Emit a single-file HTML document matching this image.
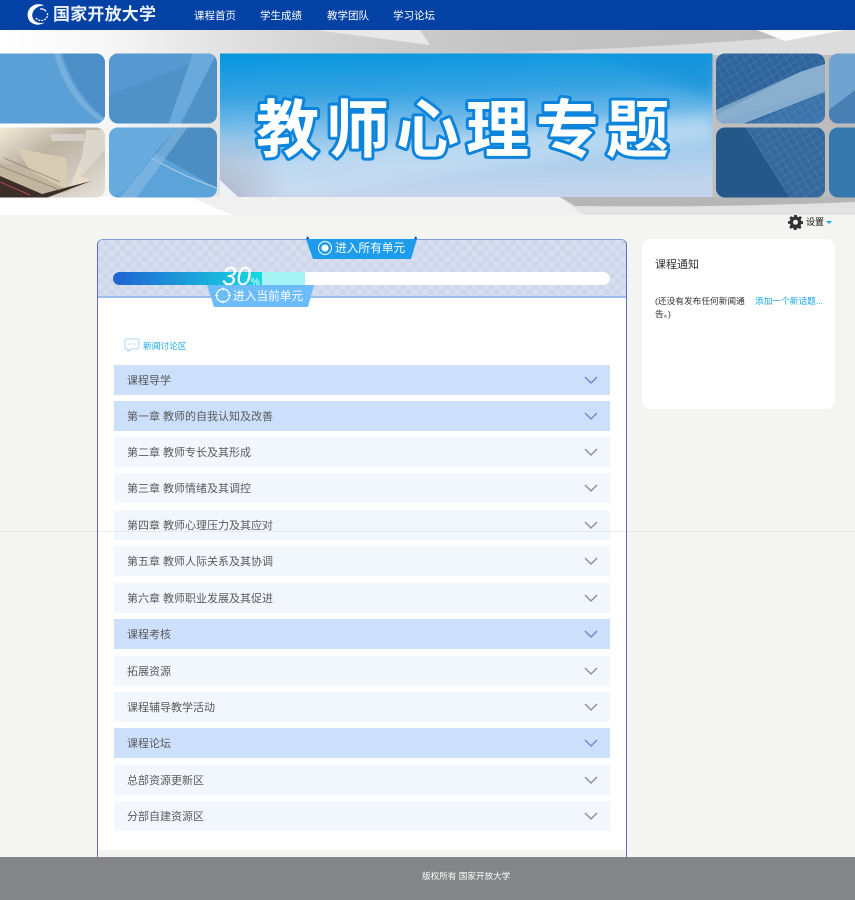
<!DOCTYPE html>
<html lang="zh-CN"><head><meta charset="utf-8"><title>教师心理专题</title>
<style>
*{box-sizing:border-box;margin:0;padding:0}
html,body{width:855px;height:900px;overflow:hidden;background:#f4f4f3}
body{position:relative;font-family:"Liberation Sans","WenQuanYi Zen Hei","Noto Sans CJK SC",sans-serif}
.a{position:absolute;white-space:nowrap}
.top{left:0;top:0;width:855px;height:30px;background:#0341a4}
.nav{top:9px;font-size:10.5px;line-height:14px;color:#fff}
.card{left:97px;top:239px;width:530px;height:618px;background:#fff;border:1px solid #6169c4;border-top-color:#7f9fe0;border-bottom:0;border-radius:6px 6px 0 0;overflow:hidden}
.head{left:0;top:0;width:528px;height:58px;border-bottom:2px solid #9dbcec;background-color:#d7deef;
background-image:linear-gradient(45deg,#ced6eb 25%,transparent 25%,transparent 75%,#ced6eb 75%),linear-gradient(45deg,#ced6eb 25%,transparent 25%,transparent 75%,#ced6eb 75%);background-size:11px 11px;background-position:0 0,5.5px 5.5px}
.row{left:114px;width:496px;height:30px;background:#f2f7fe;color:#5a5a5a;font-size:11px;line-height:32px;padding-left:13px}
.row.on{background:#cce0fc}
.row svg{position:absolute;right:12px;top:10px}
.side{left:642px;top:239px;width:193px;height:170px;background:#fff;border-radius:8px}
.foot{left:0;top:857px;width:855px;height:43px;background:#848586}
.line{left:0;top:531px;width:855px;height:1px;background:rgba(120,120,110,.1)}
</style></head><body>

<div class="a top"></div>
<svg class="a" style="left:26px;top:3px" width="24" height="23" viewBox="0 0 24 23"><path d="M18 2.500C15 .5 9 .5 5 4 .5 8 .5 15 4.500 19c4 3.500 10 3.500 14 .5-4 1-8 .5-10.500-2.500C5 13.500 6 8.500 9.500 5.500 12 3.500 15 2.500 18 2.500z" fill="#fff"/><path d="M10 15c2 3 7 3.500 10 .5 1.500-1.500 2-4 1.300-6" fill="none" stroke="#fff" stroke-width="1.300" stroke-dasharray="2 1"/><path d="M14 6c2.500-.5 5 .5 6 2.500" fill="none" stroke="#fff" stroke-width="1.200"/></svg>
<div class="a" style="left:53px;top:5px;font-size:17px;line-height:20px;font-weight:bold;color:#e9f0f8;letter-spacing:.2px">国家开放大学</div>
<div class="a nav" style="left:194px">课程首页</div>
<div class="a nav" style="left:260px">学生成绩</div>
<div class="a nav" style="left:327px">教学团队</div>
<div class="a nav" style="left:393px">学习论坛</div>

<svg class="a" style="left:0;top:30px" width="855" height="185" viewBox="0 0 855 185">
<defs>
<linearGradient id="bg" gradientUnits="userSpaceOnUse" x1="0" x2="855" y1="0" y2="0"><stop offset="0" stop-color="#fff"/><stop offset=".12" stop-color="#f7f7f7"/><stop offset=".26" stop-color="#e2e2e2"/><stop offset=".4" stop-color="#d0d0d0"/><stop offset=".6" stop-color="#c4c4c4"/><stop offset="1" stop-color="#bcbcbc"/></linearGradient>
<linearGradient id="blue" x1="0" x2="0.1" y1="0" y2="1"><stop offset="0" stop-color="#0596de"/><stop offset=".3" stop-color="#35a2e2"/><stop offset=".62" stop-color="#96c8ec"/><stop offset="1" stop-color="#c2d4ec"/></linearGradient>
<linearGradient id="book" x1="0" x2="1" y1="0" y2="1"><stop offset="0" stop-color="#fbf2de"/><stop offset=".4" stop-color="#bdb3a4"/><stop offset=".7" stop-color="#cfc8bc"/><stop offset="1" stop-color="#e8e4dc"/></linearGradient>
<radialGradient id="lilac" gradientUnits="userSpaceOnUse" cx="220" cy="167" r="70"><stop offset="0" stop-color="#b0b6c8"/><stop offset="1" stop-color="#b4bccf" stop-opacity="0"/></radialGradient>
<filter id="sb" x="-20%" y="-40%" width="140%" height="180%"><feGaussianBlur stdDeviation="6"/></filter>
<pattern id="grid" width="7" height="7" patternUnits="userSpaceOnUse" patternTransform="rotate(-32)"><path d="M0 0H7M0 0V7" stroke="#8fb4d6" stroke-width=".8" opacity=".4"/></pattern>
<clipPath id="c1"><rect x="-10" y="23.500" width="115" height="70" rx="9"/></clipPath>
<clipPath id="c2"><rect x="109" y="23.500" width="108" height="70" rx="9"/></clipPath>
<clipPath id="c3"><rect x="-10" y="97.500" width="115" height="70" rx="9"/></clipPath>
<clipPath id="c4"><rect x="109" y="97.500" width="108" height="70" rx="9"/></clipPath>
<clipPath id="c5"><rect x="716" y="23.500" width="109" height="70" rx="9"/></clipPath>
<clipPath id="c6"><rect x="716" y="97.500" width="109" height="70" rx="9"/></clipPath>
<clipPath id="c7"><rect x="829" y="23.500" width="40" height="70" rx="9"/></clipPath>
<clipPath id="c8"><rect x="829" y="97.500" width="40" height="70" rx="9"/></clipPath>
<clipPath id="cb"><rect x="220" y="23.500" width="492.500" height="143.500"/></clipPath>
</defs>
<rect width="855" height="185" fill="url(#bg)"/>
<path d="M315 0H420L430 15z" fill="#e8e8e8"/>
<path d="M505 22C600 20 700 14 790 7L760 0H855V25H712z" fill="#dcdcdc"/>
<path d="M757 0H845L785 11z" fill="#fbfbfb"/>
<rect y="167" width="855" height="18" fill="#f0f0f0"/>
<path d="M0 167H190L232 185H0z" fill="#fff"/>
<path d="M560 167H855V185H583z" fill="#e2e2e2"/>
<path d="M560 167H855V172C760 176 660 177 575 176z" fill="#b6b6b6"/>

<g clip-path="url(#c1)"><rect x="-10" y="23" width="120" height="72" fill="#5a9fd6"/><path d="M62 23C70 50 85 72 105 88V23z" fill="#4c8fc6"/><path d="M60 23C68 52 85 76 105 90V94C80 80 62 55 54 23z" fill="#8dbde3" opacity=".55"/></g>
<g clip-path="url(#c2)"><rect x="109" y="23" width="108" height="72" fill="#4f92c8"/><path d="M109 65L170 42 215 23H109z" fill="#5698cf"/><path d="M193 23H217L180 95H168z" fill="#69a9dc"/></g>
<g clip-path="url(#c3)"><rect x="-10" y="97" width="115" height="72" fill="url(#book)"/><path d="M50 104h34v7H52z" fill="#d5d0c8"/><path d="M86 100L105 100V120L78 150z" fill="#dcd6cc"/><path d="M0 132L30 142 70 160 92 151 66 162 30 167H0z" fill="#c3b6a0"/><path d="M16 118L66 128 68 160 30 140z" fill="#d9ccb4"/><path d="M68 160L82 128 80 146 91 150z" fill="#e6dcc8"/><path d="M0 146L42 164 91 151 46 168H0z" fill="#3a2e26"/><path d="M0 152L30 165" stroke="#b34850" stroke-width="1"/><path d="M0 136L60 160M4 128L60 152" stroke="#8d7d68" stroke-width="1" opacity=".7"/></g>
<g clip-path="url(#c4)"><rect x="109" y="97" width="108" height="72" fill="#5ca3da"/><path d="M155 123L178 97H217V158z" fill="#4c8ec4"/><path d="M109 97C140 125 180 145 217 158" stroke="#a8cdea" stroke-width="1.200" fill="none"/><path d="M118 170L178 97H188L135 170z" fill="#8fc0e6" opacity=".55"/><path d="M109 97H178L155 123 125 160 109 168z" fill="#68abde"/></g>

<g clip-path="url(#cb)">
<rect x="220" y="23" width="493" height="144" fill="url(#blue)"/>
<path d="M600 23H712V70C680 50 640 40 600 23z" fill="#0a8cd6" opacity=".5" filter="url(#sb)"/>
<path d="M220 130C380 120 560 90 712 85V110C560 125 420 150 300 167H220z" fill="#dcebf8" opacity=".4" filter="url(#sb)"/>
<rect x="220" y="97" width="70" height="70" fill="url(#lilac)"/>
<path d="M220 150L238 167H220z" fill="#eef1f6"/>
</g>

<text x="256" y="122" font-family="'Noto Sans CJK SC','WenQuanYi Zen Hei',sans-serif" font-weight="700" font-size="63" letter-spacing="7" fill="#fff" stroke="#0d84dc" stroke-width="6" stroke-linejoin="round" paint-order="stroke">教师心理专题</text>

<g clip-path="url(#c5)"><rect x="716" y="23" width="109" height="72" fill="#2f649a"/><path d="M716 85L800 42 825 34V62L740 95H716z" fill="#84abcd"/><path d="M745 95L825 62V95z" fill="#3a74aa"/><rect x="716" y="23" width="109" height="72" fill="url(#grid)"/><path d="M716 80L800 42 825 34V60L750 82 716 92z" fill="#8cb0d0" opacity=".8"/></g>
<g clip-path="url(#c6)"><rect x="716" y="97" width="109" height="72" fill="#235889"/><path d="M745 97H825V168H790z" fill="#34689c"/><path d="M745 97H825V168H790z" fill="url(#grid)"/></g>
<g clip-path="url(#c7)"><rect x="829" y="23" width="40" height="72" fill="#6fa4d0"/><path d="M829 80L855 60V95H829z" fill="#4980b4"/></g>
<g clip-path="url(#c8)"><rect x="829" y="97" width="40" height="72" fill="#3478ae"/></g>
</svg>

<svg class="a" style="left:788px;top:215px" width="15" height="15" viewBox="0 0 24 24"><path fill="#333" fill-rule="evenodd" d="M10 1h4l.7 3.200 2 .8 2.800-1.800 2.800 2.800L20 8.800l.8 2 3.200.7v4l-3.200.7-.8 2 1.800 2.800-2.800 2.800-2.800-1.800-2 .8-.7 3.200h-4l-.7-3.200-2-.8-2.800 1.800L2.200 20.500 4 17.700l-.8-2L0 15.500v-4l3.200-.7.8-2L2.200 6 5 3.200 7.300 5l2-.8zM12 9a4 4 0 1 0 0 8 4 4 0 0 0 0-8z" transform="translate(0 -1.500)"/></svg>
<div class="a" style="left:806px;top:216px;font-size:9px;line-height:13px;color:#111">设置</div>
<div class="a" style="left:826px;top:221px;width:0;height:0;border:3px solid transparent;border-top:3px solid #19a6e2"></div>

<div class="a card">
  <div class="a head"></div>
</div>

<svg class="a" style="left:304px;top:236px" width="114" height="24" viewBox="0 0 114 24"><path d="M2 3l2-3 1 3h105l2-3 1 3-6 20H9z" fill="#1d9cec"/><path d="M2 3l2-3 1 3zM110 3l2-3 1 3z" fill="#0a4ea8"/><circle cx="21" cy="12" r="6.500" fill="none" stroke="#fff" stroke-width="1"/><circle cx="21" cy="12" r="3.500" fill="#fff"/></svg>
<div class="a" style="left:335px;top:241px;font-size:11.7px;line-height:15px;color:#fff">进入所有单元</div>

<div class="a" style="left:113px;top:272px;width:497px;height:13px;background:#fff;border-radius:7px"></div>
<div class="a" style="left:113px;top:272px;width:192px;height:13px;background:#a6f3f6;border-radius:7px 0 0 7px"></div>
<div class="a" style="left:113px;top:272px;width:149px;height:13px;background:linear-gradient(90deg,#1f63d2,#17d8e2);border-radius:7px 0 0 7px"></div>
<div class="a" style="left:222px;top:262px;font-size:26px;line-height:28px;font-style:italic;color:#fff">30<span style="font-size:10px;font-style:normal">%</span></div>

<svg class="a" style="left:206px;top:285px" width="110" height="24" viewBox="0 0 110 24"><path d="M1 0H108L102 22H8z" fill="#6cbcfb"/><circle cx="17" cy="10.500" r="6.500" fill="none" stroke="#fff" stroke-width="1.200"/><path d="M17 2.500v3M17 15.500v3M9 10.500h3M22 10.500h3" stroke="#fff" stroke-width="1"/></svg>
<div class="a" style="left:233px;top:289px;font-size:11.7px;line-height:15px;color:#fff">进入当前单元</div>

<svg class="a" style="left:124px;top:338px" width="16" height="15" viewBox="0 0 16 15"><path d="M2.500 1h11a1.500 1.500 0 0 1 1.500 1.500v7a1.500 1.500 0 0 1-1.500 1.500H7l-3 2.500V11H2.500A1.500 1.500 0 0 1 1 9.500v-7A1.500 1.500 0 0 1 2.500 1z" fill="none" stroke="#a9d8f3" stroke-width="1"/><path d="M4.500 6h1M7.500 6h1M10.500 6h1" stroke="#8cc8ec" stroke-width="1.200"/></svg>
<div class="a" style="left:143px;top:339px;font-size:8.7px;line-height:14px;color:#19a6e2">新闻讨论区</div>

<div class="a row on" style="top:365px">课程导学<svg width="14" height="10" viewBox="0 0 14 10"><path d="M1 2l6 6 6-6" fill="none" stroke="#7a88cc" stroke-width="1.500"/></svg></div>
<div class="a row on" style="top:401px">第一章 教师的自我认知及改善<svg width="14" height="10" viewBox="0 0 14 10"><path d="M1 2l6 6 6-6" fill="none" stroke="#7a88cc" stroke-width="1.500"/></svg></div>
<div class="a row" style="top:437px">第二章 教师专长及其形成<svg width="14" height="10" viewBox="0 0 14 10"><path d="M1 2l6 6 6-6" fill="none" stroke="#8f9299" stroke-width="1.500"/></svg></div>
<div class="a row" style="top:473px">第三章 教师情绪及其调控<svg width="14" height="10" viewBox="0 0 14 10"><path d="M1 2l6 6 6-6" fill="none" stroke="#8f9299" stroke-width="1.500"/></svg></div>
<div class="a row" style="top:510px">第四章 教师心理压力及其应对<svg width="14" height="10" viewBox="0 0 14 10"><path d="M1 2l6 6 6-6" fill="none" stroke="#8f9299" stroke-width="1.500"/></svg></div>
<div class="a row" style="top:546px">第五章 教师人际关系及其协调<svg width="14" height="10" viewBox="0 0 14 10"><path d="M1 2l6 6 6-6" fill="none" stroke="#8f9299" stroke-width="1.500"/></svg></div>
<div class="a row" style="top:583px">第六章 教师职业发展及其促进<svg width="14" height="10" viewBox="0 0 14 10"><path d="M1 2l6 6 6-6" fill="none" stroke="#8f9299" stroke-width="1.500"/></svg></div>
<div class="a row on" style="top:619px">课程考核<svg width="14" height="10" viewBox="0 0 14 10"><path d="M1 2l6 6 6-6" fill="none" stroke="#7a88cc" stroke-width="1.500"/></svg></div>
<div class="a row" style="top:656px">拓展资源<svg width="14" height="10" viewBox="0 0 14 10"><path d="M1 2l6 6 6-6" fill="none" stroke="#8f9299" stroke-width="1.500"/></svg></div>
<div class="a row" style="top:692px">课程辅导教学活动<svg width="14" height="10" viewBox="0 0 14 10"><path d="M1 2l6 6 6-6" fill="none" stroke="#8f9299" stroke-width="1.500"/></svg></div>
<div class="a row on" style="top:728px">课程论坛<svg width="14" height="10" viewBox="0 0 14 10"><path d="M1 2l6 6 6-6" fill="none" stroke="#7a88cc" stroke-width="1.500"/></svg></div>
<div class="a row" style="top:765px">总部资源更新区<svg width="14" height="10" viewBox="0 0 14 10"><path d="M1 2l6 6 6-6" fill="none" stroke="#8f9299" stroke-width="1.500"/></svg></div>
<div class="a row" style="top:801px">分部自建资源区<svg width="14" height="10" viewBox="0 0 14 10"><path d="M1 2l6 6 6-6" fill="none" stroke="#8f9299" stroke-width="1.500"/></svg></div>
<div class="a" style="left:98px;top:850px;width:528px;height:7px;background:#f4f4f3"></div>

<div class="a side"></div>
<div class="a" style="left:655px;top:258px;font-size:11px;line-height:14px;color:#333">课程通知</div>
<div class="a" style="left:655px;top:295px;font-size:8.7px;line-height:13px;color:#333">(还没有发布任何新闻通</div>
<div class="a" style="left:755px;top:295px;font-size:8.7px;line-height:13px;color:#19a6e2">添加一个新话题...</div>
<div class="a" style="left:655px;top:308px;font-size:8.7px;line-height:13px;color:#333">告。)</div>

<div class="a line"></div>

<div class="a foot"></div>
<div class="a" style="left:422px;top:869px;font-size:8.6px;line-height:14px;color:#fff">版权所有 国家开放大学</div>
</body></html>
